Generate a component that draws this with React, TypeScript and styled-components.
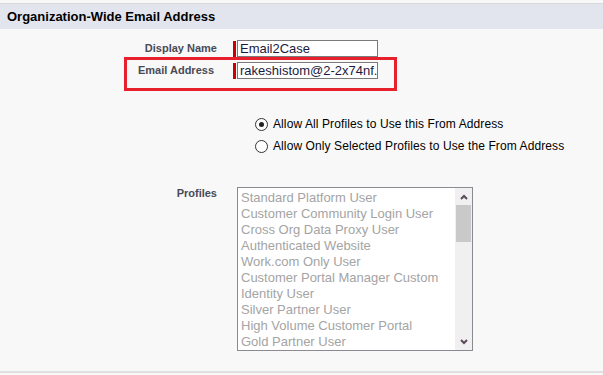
import React from "react";
import styled, { createGlobalStyle } from "styled-components";

const GlobalStyle = createGlobalStyle`
  html, body {
    margin: 0;
    padding: 0;
    background: #f8f8f8;
    font-family: "Liberation Sans", Arial, sans-serif;
  }
`;

const Page = styled.div`
  width: 603px;
  height: 373px;
  background: #f8f8f8;
  padding-top: 3px;
  box-sizing: border-box;
  border-bottom: 2px solid #e0e0e0;
  overflow: hidden;
`;

const Header = styled.div`
  height: 25px;
  border-top: 1px solid #d8d8d8;
  background: #e3e5ee;
  display: flex;
  align-items: center;
  padding-left: 7px;
  font-size: 13px;
  font-weight: bold;
  color: #000;
`;

const Form = styled.div`
  display: grid;
  grid-template-columns: 217px 1fr;
  padding-top: 11px;
`;

const Label = styled.div<{ $top?: number }>`
  text-align: right;
  font-size: 11px;
  font-weight: bold;
  color: #4a4a56;
  padding-top: ${(p) => p.$top ?? 2}px;
`;

const Field = styled.div<{ $left?: number; $top?: number }>`
  padding-left: ${(p) => p.$left ?? 16}px;
  padding-top: ${(p) => p.$top ?? 0}px;
  display: flex;
  align-items: flex-start;
`;

const Required = styled.span`
  width: 3px;
  height: 16px;
  background: #c00;
  margin-top: 1px;
  margin-right: 1px;
`;

const TextBox = styled.div`
  width: 137px;
  height: 15px;
  border: 1px solid #7a7a7a;
  background: #fff;
  font-size: 13px;
  line-height: 15px;
  color: #1a1a40;
  padding-left: 2px;
  white-space: nowrap;
  overflow: hidden;
`;

const Row = styled.div`
  display: contents;
`;

const Highlight = styled.div`
  grid-column: 1 / span 2;
  margin: 0 0 0 124px;
  width: 267px;
  height: 28px;
  border: 3px solid #e8202c;
  display: grid;
  grid-template-columns: 87px 1fr;
`;

const RadioGroup = styled.div`
  grid-column: 2;
  padding: 26px 0 0 38px;
  display: flex;
  flex-direction: column;
  gap: 8px;
`;

const RadioRow = styled.label`
  display: flex;
  align-items: center;
  font-size: 12px;
  letter-spacing: 0.1px;
  color: #000;
  gap: 5px;
  height: 14px;
`;

const RadioDot = styled.span<{ $checked?: boolean }>`
  width: 11px;
  height: 11px;
  border-radius: 50%;
  border: 1px solid #333;
  background: #fff;
  display: flex;
  align-items: center;
  justify-content: center;
  &::after {
    content: "";
    display: ${(p) => (p.$checked ? "block" : "none")};
    width: 5px;
    height: 5px;
    border-radius: 50%;
    background: #222;
  }
`;

const ListBox = styled.div`
  margin: 34px 0 0 20px;
  width: 234px;
  height: 162px;
  border: 1px solid #8a8a90;
  background: #fff;
  display: flex;
`;

const Items = styled.div`
  flex: 1;
  padding: 2px 0 0 3px;
  overflow: hidden;
`;

const Item = styled.div`
  font-size: 13px;
  line-height: 16px;
  color: #a4a4a4;
  white-space: nowrap;
`;

const Scrollbar = styled.div`
  width: 17px;
  background: #f0f0f0;
  display: flex;
  flex-direction: column;
`;

const Arrow = styled.div`
  height: 17px;
  display: flex;
  align-items: center;
  justify-content: center;
`;

const Track = styled.div`
  flex: 1;
`;

const Thumb = styled.div`
  height: 37px;
  margin: 0 1px;
  background: #c9c9c9;
`;

const profiles = [
  "Standard Platform User",
  "Customer Community Login User",
  "Cross Org Data Proxy User",
  "Authenticated Website",
  "Work.com Only User",
  "Customer Portal Manager Custom",
  "Identity User",
  "Silver Partner User",
  "High Volume Customer Portal",
  "Gold Partner User",
];

const Chevron = ({ up }: { up?: boolean }) => (
  <svg width="8" height="6" viewBox="0 0 8 6">
    <path
      d={up ? "M1 5 L4 2 L7 5" : "M1 1 L4 4 L7 1"}
      stroke="#5a4a5a"
      strokeWidth="2"
      fill="none"
    />
  </svg>
);

export default function App() {
  return (
    <Page>
      <GlobalStyle />
      <Header>Organization-Wide Email Address</Header>
      <Form>
        <Row>
          <Label>Display Name</Label>
          <Field>
            <Required />
            <TextBox>Email2Case</TextBox>
          </Field>
        </Row>
        <Highlight>
          <Label $top={4}>Email Address</Label>
          <Field $left={19} $top={2}>
            <Required />
            <TextBox>rakeshistom@2-2x74nf.</TextBox>
          </Field>
        </Highlight>
        <RadioGroup>
          <RadioRow>
            <RadioDot $checked />
            Allow All Profiles to Use this From Address
          </RadioRow>
          <RadioRow>
            <RadioDot />
            Allow Only Selected Profiles to Use the From Address
          </RadioRow>
        </RadioGroup>
        <Label $top={34}>Profiles</Label>
        <div>
          <ListBox>
            <Items>
              {profiles.map((p) => (
                <Item key={p}>{p}</Item>
              ))}
            </Items>
            <Scrollbar>
              <Arrow>
                <Chevron up />
              </Arrow>
              <Track>
                <Thumb />
              </Track>
              <Arrow>
                <Chevron />
              </Arrow>
            </Scrollbar>
          </ListBox>
        </div>
      </Form>
    </Page>
  );
}
